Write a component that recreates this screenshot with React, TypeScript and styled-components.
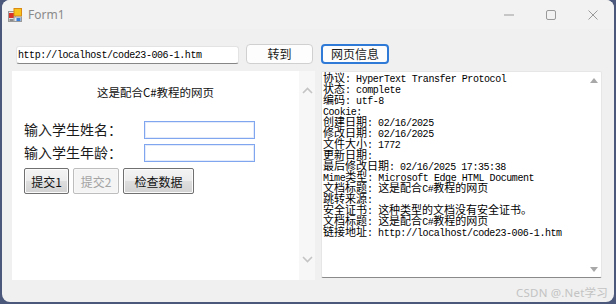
import React from "react";
import styled, { createGlobalStyle } from "styled-components";

const Global = createGlobalStyle`
  html, body { margin: 0; padding: 0; }
  body {
    background: #4b587b;
    width: 616px;
    height: 304px;
    overflow: hidden;
    font-family: "Noto Sans CJK SC", "Noto Sans", sans-serif;
  }
`;

const Win = styled.div`
  position: relative;
  margin: 0 2px 0 2px;
  height: 302px;
  background: #f0f0f0;
  border-radius: 8px;
  overflow: hidden;
  display: flex;
  flex-direction: column;
`;

const TitleBar = styled.div`
  height: 29px;
  display: flex;
  align-items: center;
  padding-left: 6px;
  background: #f2f2f2;
`;

const AppIcon = styled.svg`
  width: 14px;
  height: 14px;
  flex: none;
`;

const Title = styled.span`
  margin-left: 6px;
  font-family: "Noto Sans", "Open Sans", sans-serif;
  font-size: 12px;
  color: #8a8a8a;
`;

const Spacer = styled.div`
  flex: 1;
`;

const Caption = styled.div`
  width: 42px;
  height: 29px;
  display: flex;
  align-items: center;
  justify-content: center;
  svg { display: block; }
`;

const Toolbar = styled.div`
  display: flex;
  align-items: flex-start;
  padding: 15px 0 0 14px;
`;

const UrlBox = styled.div`
  box-sizing: border-box;
  width: 223px;
  height: 18px;
  margin-top: 2px;
  background: #ffffff;
  border: 1px solid #e3e3e3;
  border-bottom-color: #868686;
  border-radius: 3px;
  padding-left: 1px;
  display: flex;
  align-items: center;
  white-space: pre;
  color: #000;
`;

const UrlText = styled.span`
  font-family: "Liberation Mono", monospace;
  font-size: 10px;
  letter-spacing: -0.44px;
`;

const WinButton = styled.button<{ $w: number; $gap: number; $focus?: boolean }>`
  box-sizing: border-box;
  width: ${(p) => p.$w}px;
  height: 20px;
  margin: 0 0 0 ${(p) => p.$gap}px;
  padding: 0;
  background: #fdfdfd;
  border: ${(p) => (p.$focus ? "2px solid #2f7ad6" : "1px solid #d0d0d0")};
  border-radius: 4px;
  font-family: "Noto Sans CJK SC", sans-serif;
  font-size: 12px;
  line-height: 16px;
  color: #1b1b1b;
  display: flex;
  align-items: center;
  justify-content: center;
`;

const Main = styled.div`
  display: flex;
  align-items: flex-start;
  gap: 6px;
  margin-top: 7px;
  padding-left: 10px;
`;

const Browser = styled.div`
  width: 303px;
  height: 209px;
  display: flex;
  background: #ffffff;
`;

const Page = styled.div`
  flex: 1;
  padding-top: 13px;
`;

const PageTitle = styled.div`
  text-align: center;
  font-size: 11.5px;
  line-height: 16px;
  color: #111;
`;

const Form = styled.div`
  margin-top: 21px;
  padding-left: 12px;
  display: flex;
  flex-direction: column;
  gap: 5px;
`;

const Row = styled.div`
  display: flex;
  align-items: center;
  height: 18px;
`;

const Label = styled.span`
  width: 120px;
  font-size: 14px;
  line-height: 18px;
  padding-bottom: 2px;
  color: #1a1a1a;
  white-space: nowrap;
`;

const Field = styled.div`
  box-sizing: border-box;
  width: 111px;
  height: 18px;
  border: 1px solid #7fa6ee;
  box-shadow: inset 0 0 0 1px #e4ecfb;
  background: #fff;
`;

const ButtonRow = styled.div`
  display: flex;
  gap: 4px;
  margin-top: 1px;
`;

const HtmlButton = styled.button<{ $w: number; disabled?: boolean }>`
  box-sizing: border-box;
  width: ${(p) => p.$w}px;
  height: 26px;
  padding: 0;
  border: 1px solid ${(p) => (p.disabled ? "#bdbdbd" : "#707070")};
  border-radius: 2px;
  background: ${(p) =>
    p.disabled
      ? "#f4f4f4"
      : "linear-gradient(#f4f4f4 0%, #ececec 48%, #dedede 52%, #d2d2d2 100%)"};
  box-shadow: inset 0 0 0 1px ${(p) => (p.disabled ? "#f8f8f8" : "#fbfbfb")};
  font-family: "Noto Sans CJK SC", sans-serif;
  font-size: 12px;
  color: ${(p) => (p.disabled ? "#a3a3a3" : "#111")};
`;

const ChevronBar = styled.div`
  width: 16px;
  background: #f7f7f7;
  display: flex;
  flex-direction: column;
  align-items: center;
  justify-content: space-between;
  padding: 16px 0 17px;
  box-sizing: border-box;
`;

const TextPanel = styled.div`
  box-sizing: border-box;
  width: 281px;
  height: 207px;
  background: #ffffff;
  border: 1px solid #e6e6e6;
  border-bottom-color: #8a8a8a;
  border-radius: 2px;
  display: flex;
`;

const TextLines = styled.div`
  flex: 1;
  padding-left: 1px;
  font-size: 11px;
  color: #000;
`;

const Line = styled.div`
  height: 11px;
  line-height: 11px;
  white-space: pre;
  overflow: visible;
`;

const Han = styled.span`
  display: inline-block;
  height: 11px;
  line-height: 11px;
  font-family: "Noto Sans CJK SC", sans-serif;
  font-size: 11px;
`;

const Latin = styled.span`
  display: inline-block;
  height: 11px;
  line-height: 11px;
  font-family: "Liberation Mono", monospace;
  font-size: 10px;
  letter-spacing: -0.44px;
`;

const ArrowBar = styled.div`
  width: 14px;
  display: flex;
  flex-direction: column;
  align-items: center;
  justify-content: space-between;
  padding: 6px 0 5px;
  box-sizing: border-box;
  svg { display: block; }
`;

const Watermark = styled.div`
  position: absolute;
  right: 6px;
  bottom: 2px;
  font-family: "Noto Sans", "Noto Sans CJK SC", sans-serif;
  font-size: 11.5px;
  line-height: 14px;
  color: #c3c3c3;
  letter-spacing: 0.2px;
`;

const CJK_RE = /([\u2E80-\u9FFF\u3000-\u303F\uFF00-\uFFEF]+)/;

function Mixed({ text }: { text: string }) {
  return (
    <>
      {text
        .split(CJK_RE)
        .filter((s) => s.length > 0)
        .map((part, i) =>
          CJK_RE.test(part) ? <Han key={i}>{part}</Han> : <Latin key={i}>{part}</Latin>
        )}
    </>
  );
}

const info = [
  "协议: HyperText Transfer Protocol",
  "状态: complete",
  "编码: utf-8",
  "Cookie:",
  "创建日期: 02/16/2025",
  "修改日期: 02/16/2025",
  "文件大小: 1772",
  "更新日期:",
  "最后修改日期: 02/16/2025 17:35:38",
  "Mime类型: Microsoft Edge HTML Document",
  "文档标题: 这是配合C#教程的网页",
  "跳转来源:",
  "安全证书: 这种类型的文档没有安全证书。",
  "文档标题: 这是配合C#教程的网页",
  "链接地址: http://localhost/code23-006-1.htm",
];

export default function App() {
  return (
    <>
      <Global />
      <Win>
        <TitleBar>
          <AppIcon viewBox="0 0 14 14">
            <rect x="0.5" y="3.5" width="7" height="10" fill="#e4e4e4" stroke="#9a9a9a" />
            <rect x="1" y="5" width="5" height="5" fill="#d9322b" />
            <rect x="6" y="0.5" width="7.5" height="7.5" fill="#f8c21c" stroke="#d98a12" />
            <rect x="6" y="9" width="7.5" height="4.5" fill="#e8e8e8" stroke="#9a9a9a" />
            <rect x="8.5" y="10" width="4" height="3" fill="#3b7fd9" />
            <rect x="1.5" y="11" width="4" height="2" fill="#8a8a8a" />
          </AppIcon>
          <Title>Form1</Title>
          <Spacer />
          <Caption>
            <svg width="10" height="2" viewBox="0 0 10 2">
              <line x1="0" y1="1" x2="10" y2="1" stroke="#9a9a9a" strokeWidth="1" />
            </svg>
          </Caption>
          <Caption>
            <svg width="10" height="10" viewBox="0 0 10 10">
              <rect x="0.5" y="0.5" width="9" height="9" rx="1.5" fill="none" stroke="#9a9a9a" />
            </svg>
          </Caption>
          <Caption>
            <svg width="10" height="10" viewBox="0 0 10 10">
              <path d="M0.5 0.5 L9.5 9.5 M9.5 0.5 L0.5 9.5" stroke="#9a9a9a" strokeWidth="1" />
            </svg>
          </Caption>
        </TitleBar>

        <Toolbar>
          <UrlBox>
            <UrlText>http://localhost/code23-006-1.htm</UrlText>
          </UrlBox>
          <WinButton $w={67} $gap={7}>转到</WinButton>
          <WinButton $w={68} $gap={8} $focus>网页信息</WinButton>
        </Toolbar>

        <Main>
          <Browser>
            <Page>
              <PageTitle>这是配合C#教程的网页</PageTitle>
              <Form>
                <Row>
                  <Label>输入学生姓名：</Label>
                  <Field />
                </Row>
                <Row>
                  <Label>输入学生年龄：</Label>
                  <Field />
                </Row>
                <ButtonRow>
                  <HtmlButton $w={45}>提交1</HtmlButton>
                  <HtmlButton $w={46} disabled>提交2</HtmlButton>
                  <HtmlButton $w={71}>检查数据</HtmlButton>
                </ButtonRow>
              </Form>
            </Page>
            <ChevronBar>
              <svg width="11" height="7" viewBox="0 0 11 7">
                <polyline points="1,6 5.5,1.5 10,6" fill="none" stroke="#c4c4c4" strokeWidth="1.6" />
              </svg>
              <svg width="11" height="7" viewBox="0 0 11 7">
                <polyline points="1,1 5.5,5.5 10,1" fill="none" stroke="#c4c4c4" strokeWidth="1.6" />
              </svg>
            </ChevronBar>
          </Browser>

          <TextPanel>
            <TextLines>
              {info.map((l, i) => (
                <Line key={i}>
                  <Mixed text={l} />
                </Line>
              ))}
            </TextLines>
            <ArrowBar>
              <svg width="8" height="5" viewBox="0 0 8 5">
                <polygon points="0,5 4,0 8,5" fill="#a8a8a8" />
              </svg>
              <svg width="8" height="5" viewBox="0 0 8 5">
                <polygon points="0,0 4,5 8,0" fill="#a8a8a8" />
              </svg>
            </ArrowBar>
          </TextPanel>
        </Main>

        <Watermark>CSDN @.Net学习</Watermark>
      </Win>
    </>
  );
}
